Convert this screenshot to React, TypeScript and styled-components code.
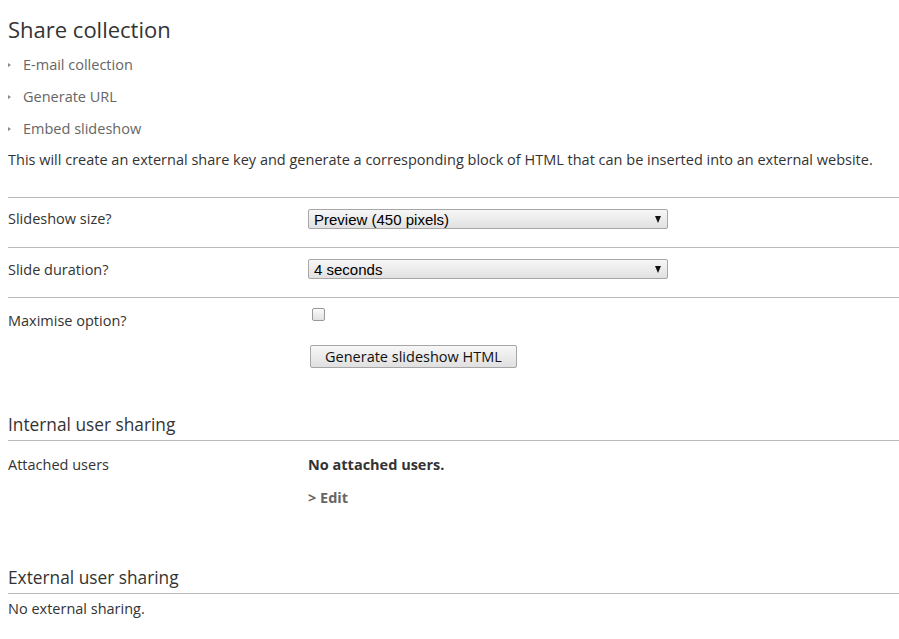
import styled, { createGlobalStyle } from 'styled-components';

const GlobalStyle = createGlobalStyle`
  html, body {
    margin: 0;
    padding: 0;
    background: #fff;
  }
  body {
    font-family: 'Open Sans', 'DejaVu Sans', sans-serif;
    font-size: 14.5px;
    color: #333;
  }
`;

const Page = styled.div`
  padding: 12px 0 20px 8px;
`;

const Title = styled.h1`
  margin: 0 0 2px;
  font-size: 22px;
  font-weight: 400;
  line-height: 34px;
  color: #333;
`;

const LinkList = styled.ul`
  list-style: none;
  margin: 0;
  padding: 0;
`;

const LinkItem = styled.li`
  display: flex;
  align-items: center;
  height: 32px;
  color: #666;
  &::before {
    content: '';
    width: 0;
    height: 0;
    border-top: 2.5px solid transparent;
    border-bottom: 2.5px solid transparent;
    border-left: 3px solid #888;
    margin: 2px 12px 0 0;
  }
`;

const Intro = styled.p`
  margin: 0;
  line-height: 32px;
`;

const Form = styled.div`
  margin-top: 21px;
  border-top: 1px solid #bbb;
`;

const Row = styled.div<{ $last?: boolean }>`
  display: grid;
  grid-template-columns: 300px 1fr;
  align-items: start;
  box-sizing: border-box;
  height: ${(p) => (p.$last ? 'auto' : '50px')};
  padding-top: ${(p) => (p.$last ? '10px' : '11px')};
  border-bottom: ${(p) => (p.$last ? 'none' : '1px solid #bbb')};
`;

const Label = styled.div<{ $offset?: number }>`
  line-height: 20px;
  padding-top: ${(p) => p.$offset ?? 0}px;
`;

const SelectBox = styled.div`
  display: flex;
  align-items: center;
  justify-content: space-between;
  width: 360px;
  height: 20px;
  box-sizing: border-box;
  padding: 0 6px 0 5px;
  font-family: 'Liberation Sans', Arial, sans-serif;
  font-size: 15px;
  color: #000;
  border: 1px solid #a6a6a6;
  border-radius: 2px;
  background: linear-gradient(#f7f7f7, #e1e1e1);
`;

const Arrow = styled.span`
  width: 0;
  height: 0;
  border-left: 3.5px solid transparent;
  border-right: 3.5px solid transparent;
  border-top: 7px solid #111;
`;

const Control = styled.div`
  display: flex;
  flex-direction: column;
  align-items: flex-start;
`;

const Checkbox = styled.span`
  display: block;
  width: 11px;
  height: 11px;
  margin: 0 0 0 4px;
  border: 1px solid #999;
  border-radius: 2px;
  background: linear-gradient(#fafafa, #e2e2e2);
`;

const Button = styled.button`
  margin: 24px 0 0 2px;
  height: 23px;
  padding: 0 14px;
  font-family: 'Open Sans', 'DejaVu Sans', sans-serif;
  font-size: 14.5px;
  color: #111;
  border: 1px solid #a6a6a6;
  border-radius: 2px;
  background: linear-gradient(#f7f7f7, #e0e0e0);
`;

const SectionTitle = styled.h2<{ $top: number }>`
  margin: ${(p) => p.$top}px 0 0;
  padding-bottom: 2px;
  font-size: 17.3px;
  font-weight: 400;
  line-height: 26px;
  color: #333;
  border-bottom: 1px solid #bbb;
`;

const InfoRow = styled.div`
  display: grid;
  grid-template-columns: 300px 1fr;
  padding-top: 14px;
  line-height: 20px;
`;

const Strong = styled.div`
  font-weight: 700;
`;

const EditLink = styled.div`
  margin-top: 13px;
  font-weight: 700;
  color: #666;
`;

const Plain = styled.div`
  padding-top: 5px;
  line-height: 20px;
`;

export default function App() {
  return (
    <Page>
      <GlobalStyle />
      <Title>Share collection</Title>
      <LinkList>
        <LinkItem>E-mail collection</LinkItem>
        <LinkItem>Generate URL</LinkItem>
        <LinkItem>Embed slideshow</LinkItem>
      </LinkList>
      <Intro>
        This will create an external share key and generate a corresponding block of HTML that can be
        inserted into an external website.
      </Intro>
      <Form>
        <Row>
          <Label>Slideshow size?</Label>
          <SelectBox>
            Preview (450 pixels)
            <Arrow />
          </SelectBox>
        </Row>
        <Row>
          <Label $offset={1}>Slide duration?</Label>
          <SelectBox>
            4 seconds
            <Arrow />
          </SelectBox>
        </Row>
        <Row $last>
          <Label $offset={3}>Maximise option?</Label>
          <Control>
            <Checkbox />
            <Button>Generate slideshow HTML</Button>
          </Control>
        </Row>
      </Form>
      <SectionTitle $top={44}>Internal user sharing</SectionTitle>
      <InfoRow>
        <div>Attached users</div>
        <div>
          <Strong>No attached users.</Strong>
          <EditLink>&gt; Edit</EditLink>
        </div>
      </InfoRow>
      <SectionTitle $top={57}>External user sharing</SectionTitle>
      <Plain>No external sharing.</Plain>
    </Page>
  );
}
